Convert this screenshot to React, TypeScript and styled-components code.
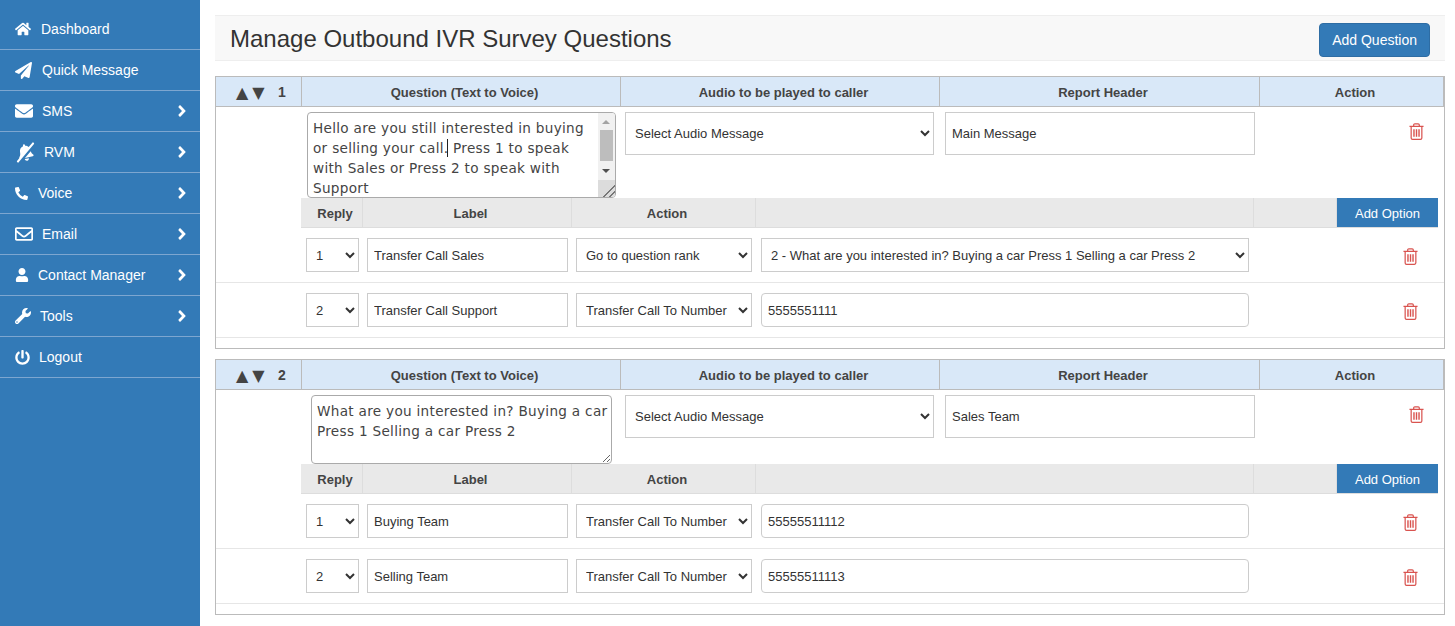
import React from "react";
import styled, { createGlobalStyle } from "styled-components";
import {
  FaHome,
  FaPaperPlane,
  FaEnvelope,
  FaBellSlash,
  FaPhoneAlt,
  FaRegEnvelope,
  FaUser,
  FaWrench,
  FaPowerOff,
  FaAngleRight,
} from "react-icons/fa";

const GlobalStyle = createGlobalStyle`
  html, body {
    margin: 0;
    height: 100%;
    overflow: hidden;
    background: #fff;
    font-family: "Liberation Sans", Arial, sans-serif;
    font-size: 14px;
    color: #333;
  }
  * { box-sizing: border-box; }
`;

const Page = styled.div`
  display: flex;
  height: 100vh;
`;

const Sidebar = styled.nav`
  width: 200px;
  flex-shrink: 0;
  background: #337ab7;
  padding-top: 9px;
`;

const NavItem = styled.a`
  display: flex;
  align-items: center;
  height: 41px;
  padding: 0 9px 0 15px;
  color: #fff;
  border-bottom: 1px solid #7da6d0;
  font-size: 14px;
`;

const NavIcon = styled.span<{ $w: number }>`
  width: ${(p) => p.$w}px;
  display: flex;
  align-items: center;
  font-size: 16px;
  flex-shrink: 0;
`;

const MirroredBell = styled(FaBellSlash)`
  transform: scaleX(-1) rotate(12deg);
`;

const NavLabel = styled.span`
  flex: 1;
`;

const Main = styled.main`
  flex: 1;
  min-width: 0;
  padding: 15px 10px 0 15px;
`;

const TitleBar = styled.div`
  display: flex;
  align-items: center;
  justify-content: space-between;
  height: 46px;
  padding: 4px 15px 0;
  background: #f8f8f8;
  border-top: 1px solid #eee;
  border-bottom: 1px solid #eee;
  margin-bottom: 15px;
`;

const Title = styled.h1`
  margin: -3px 0 0;
  font-size: 24px;
  font-weight: 400;
  color: #333;
`;

const PrimaryButton = styled.button`
  height: 34px;
  padding: 6px 12px;
  background: #337ab7;
  color: #fff;
  border: 1px solid #2e6da4;
  border-radius: 4px;
  font: 14px "Liberation Sans", Arial, sans-serif;
`;

const Card = styled.section`
  border: 1px solid #bbb;
  padding-bottom: 10px;
  margin-bottom: 10px;
`;

const QuestionGrid = styled.div`
  display: grid;
  grid-template-columns: 86px 319px 319px 320px 1fr;
`;

const HeadCell = styled.div`
  height: 30px;
  padding: 1px 0 0 7px;
  background: #d9e8f8;
  border-right: 1px solid #bbb;
  border-bottom: 1px solid #bbb;
  display: flex;
  align-items: center;
  justify-content: center;
  font-size: 13px;
  font-weight: 700;
  color: #444;
  &:last-child {
    border-right: 0;
  }
`;

const RankCell = styled(HeadCell)`
  justify-content: flex-start;
  padding-left: 20px;
`;

const Arrows = styled.span`
  font: 16px "DejaVu Sans", sans-serif;
  letter-spacing: 4px;
  color: #444;
  width: 42px;
  white-space: nowrap;
`;

const RankNumber = styled.span`
  font-size: 14px;
`;

const TextCell = styled.div<{ $inset: number }>`
  grid-column: 2;
  padding: 5px ${(p) => p.$inset}px 0;
  position: relative;
`;

const QuestionText = styled.textarea<{ $h: number; $bar?: boolean }>`
  display: block;
  width: 100%;
  height: ${(p) => p.$h}px;
  padding: 5px ${(p) => (p.$bar ? 22 : 0)}px 5px 5px;
  border: 1px solid #aaa;
  border-radius: 4px;
  outline: 0;
  background: #fff;
  color: #444;
  font: 13.6px/20px "DejaVu Sans", Verdana, sans-serif;
  letter-spacing: 0.3px;
  overflow: hidden;
  resize: vertical;
`;

const Caret = styled.span`
  position: absolute;
  left: 145px;
  top: 32px;
  width: 1px;
  height: 18px;
  background: #222;
`;

/* the textarea's own scrollbar, as it appears in the picture */
const ScrollBar = styled.div`
  position: absolute;
  top: 6px;
  right: 6px;
  width: 17px;
  height: 84px;
  background: #f1f1f1;
  border-radius: 0 3px 3px 0;
  overflow: hidden;
`;

const ScrollArrow = styled.span<{ $down?: boolean }>`
  position: absolute;
  left: 4px;
  top: ${(p) => (p.$down ? 56 : 7)}px;
  width: 0;
  height: 0;
  border-left: 4px solid transparent;
  border-right: 4px solid transparent;
  ${(p) =>
    p.$down ? "border-top: 4px solid #505050;" : "border-bottom: 4px solid #a3a3a3;"}
`;

const ScrollThumb = styled.span`
  position: absolute;
  top: 17px;
  left: 2px;
  width: 13px;
  height: 31px;
  background: #bdbdbd;
`;

const ResizeGrip = styled.span`
  position: absolute;
  left: 0;
  bottom: 0;
  width: 17px;
  height: 17px;
  background:
    linear-gradient(135deg, transparent 82%, #777 82%, #777 86%, transparent 86%),
    linear-gradient(135deg, transparent 64%, #777 64%, #777 68%, transparent 68%),
    #dcdcdc;
`;

const ControlCell = styled.div<{ $left: number; $width: number }>`
  padding: 5px 0 0 ${(p) => p.$left}px;
  width: ${(p) => p.$width}px;
`;

const TallSelect = styled.select`
  width: 100%;
  height: 43px;
  padding: 0 5px;
  background: #fff;
  border: 1px solid #ccc;
  color: #333;
  font: 13px "Liberation Sans", Arial, sans-serif;
`;

const TallInput = styled.input`
  width: 100%;
  height: 43px;
  padding: 0 6px;
  background: #fff;
  border: 1px solid #ccc;
  color: #333;
  font: 13px "Liberation Sans", Arial, sans-serif;
`;

const DeleteCell = styled.div<{ $right: number; $top: number }>`
  display: flex;
  justify-content: flex-end;
  padding: ${(p) => p.$top}px ${(p) => p.$right}px 0 0;
`;

const TrashSvg = styled.svg`
  width: 15px;
  height: 17px;
  display: block;
`;

const OptionsHead = styled.div`
  margin-left: 85px;
  margin-right: 6px;
  display: grid;
  grid-template-columns: 62px 209px 184px 498px 83px 1fr;
  height: 30px;
  background: #e9e9e9;
  border-bottom: 1px solid #ddd;
`;

const OptionHeadCell = styled.div`
  display: flex;
  align-items: center;
  justify-content: center;
  padding: 1px 0 0 7px;
  font-size: 13px;
  font-weight: 700;
  color: #444;
  border-right: 1px solid #ddd;
`;

const AddOption = styled.button`
  background: #337ab7;
  color: #fff;
  border: 0;
  padding: 1px 0 0;
  font: 13px "Liberation Sans", Arial, sans-serif;
`;

const OptionRow = styled.div`
  display: grid;
  grid-template-columns: 53px 201px 177px 488px 1fr;
  column-gap: 8px;
  height: 55px;
  padding: 10px 0 0 90px;
  border-bottom: 1px solid #e6e6e6;
  > :nth-child(3) {
    width: 176px;
  }
`;

const RowSelect = styled.select`
  height: 34px;
  min-width: 0;
  width: 100%;
  padding: 0 5px;
  background: #fff;
  border: 1px solid #ccc;
  color: #333;
  font: 13px "Liberation Sans", Arial, sans-serif;
`;

const RowInput = styled.input<{ $round?: boolean }>`
  height: 34px;
  min-width: 0;
  width: 100%;
  padding: 0 6px;
  background: #fff;
  border: 1px solid #ccc;
  border-radius: ${(p) => (p.$round ? 4 : 0)}px;
  color: #333;
  font: 13px "Liberation Sans", Arial, sans-serif;
`;

const Trash = () => (
  <TrashSvg viewBox="0 0 16 18" fill="none" stroke="#d9534f" strokeWidth="1.3">
    <path d="M0.5 3.5h15M5 3.5V2a1.2 1.2 0 0 1 1.2-1.2h3.6A1.2 1.2 0 0 1 11 2v1.5" />
    <path d="M2.3 3.5v12.3a1.5 1.5 0 0 0 1.5 1.5h8.4a1.5 1.5 0 0 0 1.5-1.5V3.5" />
    <path d="M5.3 6.5v8M8 6.5v8M10.7 6.5v8" strokeWidth="1.5" />
  </TrashSvg>
);

const nav = [
  { label: "Dashboard", icon: <FaHome />, w: 26, sub: false },
  { label: "Quick Message", icon: <FaPaperPlane size={17} />, w: 27, sub: false },
  { label: "SMS", icon: <FaEnvelope size={18} />, w: 27, sub: true },
  { label: "RVM", icon: <MirroredBell size={21} />, w: 29, sub: true },
  { label: "Voice", icon: <FaPhoneAlt size={13} />, w: 23, sub: true },
  { label: "Email", icon: <FaRegEnvelope size={18} />, w: 27, sub: true },
  { label: "Contact Manager", icon: <FaUser size={14} />, w: 23, sub: true },
  { label: "Tools", icon: <FaWrench size={16} />, w: 25, sub: true },
  { label: "Logout", icon: <FaPowerOff size={15} />, w: 24, sub: false },
];

const rankOption =
  "2 - What are you interested in? Buying a car Press 1 Selling a car Press 2";

const questions = [
  {
    rank: 1,
    text: "Hello are you still interested in buying or selling your call. Press 1 to speak with Sales or Press 2 to speak with Support",
    header: "Main Message",
    inset: 0,
    height: 86,
    rows: [
      { reply: "1", label: "Transfer Call Sales", action: "Go to question rank", target: rankOption },
      { reply: "2", label: "Transfer Call Support", action: "Transfer Call To Number", target: "5555551111" },
    ],
  },
  {
    rank: 2,
    text: "What are you interested in? Buying a car Press 1 Selling a car Press 2",
    header: "Sales Team",
    inset: 4,
    height: 69,
    rows: [
      { reply: "1", label: "Buying Team", action: "Transfer Call To Number", target: "55555511112" },
      { reply: "2", label: "Selling Team", action: "Transfer Call To Number", target: "55555511113" },
    ],
  },
];

export default function App() {
  return (
    <Page>
      <GlobalStyle />
      <Sidebar>
        {nav.map((item) => (
          <NavItem key={item.label}>
            <NavIcon $w={item.w}>{item.icon}</NavIcon>
            <NavLabel>{item.label}</NavLabel>
            {item.sub && <FaAngleRight size={18} />}
          </NavItem>
        ))}
      </Sidebar>
      <Main>
        <TitleBar>
          <Title>Manage Outbound IVR Survey Questions</Title>
          <PrimaryButton>Add Question</PrimaryButton>
        </TitleBar>
        {questions.map((q) => (
          <Card key={q.rank}>
            <QuestionGrid>
              <RankCell>
                <Arrows>▲▼</Arrows>
                <RankNumber>{q.rank}</RankNumber>
              </RankCell>
              <HeadCell>Question (Text to Voice)</HeadCell>
              <HeadCell>Audio to be played to caller</HeadCell>
              <HeadCell>Report Header</HeadCell>
              <HeadCell>Action</HeadCell>
              <TextCell $inset={q.inset + 5}>
                <QuestionText $bar={q.rank === 1} $h={q.height} defaultValue={q.text} />
                {q.rank === 1 && (
                  <>
                    <Caret />
                    <ScrollBar>
                      <ScrollArrow />
                      <ScrollThumb />
                      <ScrollArrow $down />
                      <ResizeGrip />
                    </ScrollBar>
                  </>
                )}
              </TextCell>
              <ControlCell $left={4} $width={313}>
                <TallSelect>
                  <option>Select Audio Message</option>
                </TallSelect>
              </ControlCell>
              <ControlCell $left={5} $width={315}>
                <TallInput defaultValue={q.header} />
              </ControlCell>
              <DeleteCell $right={20} $top={16}>
                <Trash />
              </DeleteCell>
            </QuestionGrid>
            <OptionsHead>
              <OptionHeadCell>Reply</OptionHeadCell>
              <OptionHeadCell>Label</OptionHeadCell>
              <OptionHeadCell>Action</OptionHeadCell>
              <OptionHeadCell />
              <OptionHeadCell />
              <AddOption>Add Option</AddOption>
            </OptionsHead>
            {q.rows.map((r) => (
              <OptionRow key={r.reply}>
                <RowSelect defaultValue={r.reply}>
                  <option>1</option>
                  <option>2</option>
                </RowSelect>
                <RowInput defaultValue={r.label} />
                <RowSelect defaultValue={r.action}>
                  <option>Go to question rank</option>
                  <option>Transfer Call To Number</option>
                </RowSelect>
                {r.target === rankOption ? (
                  <RowSelect defaultValue={r.target}>
                    <option>{rankOption}</option>
                  </RowSelect>
                ) : (
                  <RowInput $round defaultValue={r.target} />
                )}
                <DeleteCell $right={26} $top={10}>
                  <Trash />
                </DeleteCell>
              </OptionRow>
            ))}
          </Card>
        ))}
      </Main>
    </Page>
  );
}
